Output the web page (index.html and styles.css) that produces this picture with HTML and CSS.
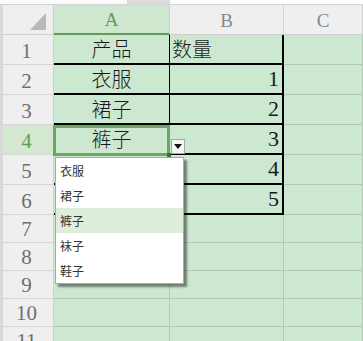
FILE: index.html
```html
<!DOCTYPE html>
<html lang="zh">
<head>
<meta charset="utf-8">
<link rel="stylesheet" href="styles.css">
</head>
<body>
<div class="app">
  <div class="topbar"><span class="tb-a"></span><span class="tb-b"></span><span class="tb-c"></span></div>
  <div class="sheet">
    <div class="corner"><svg width="16" height="17" viewBox="0 0 16 17"><polygon points="16,0 16,17 0,17" fill="#b9b9b9"/></svg></div>
    <div class="ch ch-sel">A</div>
    <div class="ch">B</div>
    <div class="ch">C</div>

    <div class="rh">1</div>
    <div class="c t ta center">产品</div>
    <div class="c t tb left">数量</div>
    <div class="c"></div>

    <div class="rh">2</div>
    <div class="c t ta center">衣服</div>
    <div class="c t tb num">1</div>
    <div class="c"></div>

    <div class="rh">3</div>
    <div class="c t ta center">裙子</div>
    <div class="c t tb num">2</div>
    <div class="c"></div>

    <div class="rh rh-sel">4</div>
    <div class="c t ta center">裤子</div>
    <div class="c t tb num">3</div>
    <div class="c"></div>

    <div class="rh">5</div>
    <div class="c t ta"></div>
    <div class="c t tb num">4</div>
    <div class="c"></div>

    <div class="rh">6</div>
    <div class="c t ta"></div>
    <div class="c t tb num">5</div>
    <div class="c"></div>

    <div class="rh">7</div><div class="c"></div><div class="c"></div><div class="c"></div>
    <div class="rh">8</div><div class="c"></div><div class="c"></div><div class="c"></div>
    <div class="rh">9</div><div class="c"></div><div class="c"></div><div class="c"></div>
    <div class="rh">10</div><div class="c"></div><div class="c"></div><div class="c"></div>
    <div class="rh">11</div><div class="c"></div><div class="c"></div><div class="c"></div>

    <div class="selection"><span class="handle"></span></div>
    <div class="dd-btn"><svg width="8" height="5" viewBox="0 0 8 5"><polygon points="0,0 8,0 4,5" fill="#111"/></svg></div>
    <ul class="dd-list">
      <li>衣服</li>
      <li>裙子</li>
      <li class="hl">裤子</li>
      <li>袜子</li>
      <li>鞋子</li>
    </ul>
  </div>
</div>
</body>
</html>
```
FILE: styles.css
```css
* { box-sizing: border-box; }
html, body { margin: 0; padding: 0; background: #fff; }
.app { width: 363px; height: 341px; overflow: hidden; position: relative; }

.topbar { height: 5px; display: flex; border-bottom: 1px solid #d4d4d4; background: #fff; }
.tb-a { width: 127px; background: #fbfbfb; }
.tb-b { width: 43px; background: #dcdcdc; }
.tb-c { flex: 1; background: #fff; }

.sheet {
  position: relative;
  display: grid;
  grid-template-columns: 54px 116px 114px 79px;
  grid-template-rows: 30px repeat(6, 30px) repeat(5, 28px);
  font-family: "Liberation Serif", "Noto Sans CJK SC", serif;
}

.corner {
  background: #efefef;
  border-right: 1px solid #cfcfcf;
  border-bottom: 1px solid #cfcfcf;
  box-shadow: inset 3px 0 0 #d9d9d9;
  display: flex;
  justify-content: flex-end;
  align-items: flex-end;
  padding: 0 7px 4px 0;
}

.ch {
  background: #efefef;
  border-right: 1px solid #d2d2d2;
  border-bottom: 1px solid #cfcfcf;
  color: #888;
  font-size: 19px;
  line-height: 22px;
  display: flex;
  justify-content: center;
  align-items: flex-end;
  padding-bottom: 2px;
}
.ch-sel {
  background: #cfe6cf;
  color: #5e9e55;
  border-bottom: 2px solid #5e9e55;
}

.rh {
  background: #efefef;
  border-right: 1px solid #cfcfcf;
  border-bottom: 1px solid #d6d6d6;
  box-shadow: inset 3px 0 0 #d9d9d9;
  color: #6e6e6e;
  font-size: 21px;
  line-height: 22px;
  display: flex;
  justify-content: center;
  align-items: flex-end;
  padding-bottom: 2px;
}
.rh-sel { background: #d4e8d1; color: #5e9e55; }

.c {
  background: #cde8d0;
  border-right: 1px solid #b3c8b6;
  border-bottom: 1px solid #b3c8b6;
  display: flex;
  align-items: flex-end;
  padding-bottom: 2px;
  color: #1a1a1a;
  font-size: 20px;
  line-height: 24px;
}
.center { justify-content: center; font-family: "Noto Sans CJK SC", sans-serif; font-weight: 300; font-size: 20px; }
.left { justify-content: flex-start; padding-left: 2px; font-family: "Noto Sans CJK SC", sans-serif; font-weight: 300; font-size: 20px; }
.num { justify-content: flex-end; padding-right: 3px; font-family: "Liberation Serif", serif; font-size: 22px; }

.t { border-bottom: 2px solid #000; }
.ta { border-right: 1px solid #000; }
.tb { border-right: 2px solid #000; }

.selection {
  position: absolute;
  left: 53px;
  top: 120px;
  width: 117px;
  height: 31px;
  border: 3px solid #6aa861;
  pointer-events: none;
}
.handle {
  position: absolute;
  right: -4px;
  bottom: -4px;
  width: 4px;
  height: 4px;
  background: #3d6e37;
}

.dd-btn {
  position: absolute;
  left: 171px;
  top: 134px;
  width: 14px;
  height: 15px;
  background: #f6f6f6;
  border: 1px solid #a6a6a6;
  display: flex;
  align-items: center;
  justify-content: center;
}

.dd-list {
  position: absolute;
  left: 55px;
  top: 152px;
  width: 129px;
  margin: 0;
  padding: 0;
  list-style: none;
  background: #fff;
  border: 1px solid #a9a9a9;
  box-shadow: 3px 3px 2px rgba(0, 0, 0, 0.45);
  font-family: "Noto Sans CJK SC", sans-serif;
  font-size: 12px;
  color: #333;
}
.dd-list li {
  height: 25px;
  line-height: 25px;
  padding-left: 4px;
}
.dd-list li.hl { background: #dfeddb; }
```
